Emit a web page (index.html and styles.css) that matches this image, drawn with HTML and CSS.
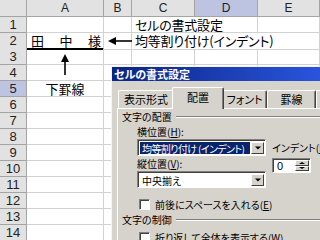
FILE: index.html
```html
<!DOCTYPE html>
<html lang="ja">
<head>
  <meta charset="UTF-8">
  <title>セルの書式設定</title>
  <link rel="stylesheet" href="styles.css">
</head>
<body>
  <div class="screen">
    <div class="sheet">
      <div class="row head">
        <div class="num"></div><div class="col">A</div><div class="col">B</div><div class="col">C</div><div class="col on">D</div><div class="col">E</div>
      </div>
      <div class="row">
        <div class="num">1</div><div class="cell"></div><div class="cell"></div><div class="cell text open">セルの書式設定</div><div class="cell"></div><div class="cell"></div>
      </div>
      <div class="row">
        <div class="num">2</div><div class="cell name"><span>田</span><span>中</span><span>様</span></div><div class="cell"></div><div class="cell text open">均等割り付け(インデント)</div><div class="cell open"></div><div class="cell"></div>
      </div>
      <div class="row">
        <div class="num">3</div><div class="cell"></div><div class="cell"></div><div class="cell"></div><div class="cell"></div><div class="cell"></div>
      </div>
      <div class="row">
        <div class="num">4</div><div class="cell"></div><div class="cell"></div><div class="cell"></div><div class="cell"></div><div class="cell"></div>
      </div>
      <div class="row">
        <div class="num on">5</div><div class="cell center">下罫線</div><div class="cell"></div><div class="cell"></div><div class="cell"></div><div class="cell"></div>
      </div>
      <div class="row">
        <div class="num">6</div><div class="cell"></div><div class="cell"></div><div class="cell"></div><div class="cell"></div><div class="cell"></div>
      </div>
      <div class="row">
        <div class="num">7</div><div class="cell"></div><div class="cell"></div><div class="cell"></div><div class="cell"></div><div class="cell"></div>
      </div>
      <div class="row">
        <div class="num">8</div><div class="cell"></div><div class="cell"></div><div class="cell"></div><div class="cell"></div><div class="cell"></div>
      </div>
      <div class="row">
        <div class="num">9</div><div class="cell"></div><div class="cell"></div><div class="cell"></div><div class="cell"></div><div class="cell"></div>
      </div>
      <div class="row">
        <div class="num">10</div><div class="cell"></div><div class="cell"></div><div class="cell"></div><div class="cell"></div><div class="cell"></div>
      </div>
      <div class="row">
        <div class="num">11</div><div class="cell"></div><div class="cell"></div><div class="cell"></div><div class="cell"></div><div class="cell"></div>
      </div>
      <div class="row">
        <div class="num">12</div><div class="cell"></div><div class="cell"></div><div class="cell"></div><div class="cell"></div><div class="cell"></div>
      </div>
      <div class="row">
        <div class="num">13</div><div class="cell"></div><div class="cell"></div><div class="cell"></div><div class="cell"></div><div class="cell"></div>
      </div>
      <div class="row">
        <div class="num">14</div><div class="cell"></div><div class="cell"></div><div class="cell"></div><div class="cell"></div><div class="cell"></div>
      </div>
    </div>

    <!-- callout arrows drawn over the grid -->
    <svg class="arrow arrow-left" width="26" height="10" viewBox="0 0 26 10">
      <polygon points="0,5 8,1 8,9" fill="#000"/>
      <line x1="7" y1="5" x2="24" y2="5" stroke="#000" stroke-width="1.6"/>
    </svg>
    <svg class="arrow arrow-up" width="10" height="22" viewBox="0 0 10 22">
      <polygon points="5,0 1,8 9,8" fill="#000"/>
      <line x1="5" y1="7" x2="5" y2="21" stroke="#000" stroke-width="1.6"/>
    </svg>

    <div class="dialog">
      <div class="title">セルの書式設定</div>
      <div class="tabs">
        <div class="tab t1">表示形式</div>
        <div class="tab t2 active">配置</div>
        <div class="tab t3">フォント</div>
        <div class="tab t4">罫線</div>
        <div class="tab t5">パターン</div>
      </div>
      <div class="panel">
        <div class="group">文字の配置</div>
        <div class="align">
          <div class="left">
            <div class="label">横位置(<u>H</u>):</div>
            <div class="combo">
              <span class="value sel">均等割り付け (インデント)</span>
              <span class="drop"></span>
            </div>
            <div class="label">縦位置(<u>V</u>):</div>
            <div class="combo">
              <span class="value">中央揃え</span>
              <span class="drop"></span>
            </div>
          </div>
          <div class="right">
            <div class="label">インデント(<u>I</u>):</div>
            <div class="spin">
              <span class="spin-value">0</span>
              <span class="spin-btns"><span class="up"></span><span class="down"></span></span>
            </div>
          </div>
        </div>
        <div class="check"><span class="box"></span>前後にスペースを入れる(<u>E</u>)</div>
        <div class="group">文字の制御</div>
        <div class="check"><span class="box"></span>折り返して全体を表示する(<u>W</u>)</div>
      </div>
    </div>
  </div>
</body>
</html>
```

FILE: styles.css
```css
body {
  margin: 0;
  background: #fff;
  font-family: "Noto Sans CJK JP", "Noto Sans", sans-serif;
  font-feature-settings: "palt";
  color: #000;
}
.screen {
  position: relative;
  width: 320px;
  height: 240px;
  overflow: hidden;
}

/* spreadsheet */
.row {
  display: grid;
  grid-template-columns: 27px 77px 28px 63px 63px 62px;
  height: 16px;
}
.row.head {
  height: 17px;
}
.cell, .num, .col {
  box-sizing: border-box;
  border-right: 1px solid #d2d2d2;
  border-bottom: 1px solid #d2d2d2;
  font-size: 13px;
  line-height: 15px;
  white-space: nowrap;
}
.num, .col {
  background: #e2e2e2;
  border-color: #a4a4a4;
  text-align: center;
  color: #222;
}
.num {
  font-family: "Liberation Sans", sans-serif;
  font-size: 13px;
}
.col {
  font-family: "Liberation Sans", sans-serif;
  font-size: 12px;
  line-height: 16px;
}
.num.on, .col.on {
  background: #bcc4e2;
}
.text {
  padding-left: 3px;
  letter-spacing: -0.2px;
}
.open {
  border-right-color: transparent;
}
.center {
  text-align: center;
}
.name {
  display: flex;
  justify-content: space-between;
  padding: 0 2px 0 4px;
  border-bottom: 2px solid #000;
}

.arrow {
  position: absolute;
}
.arrow-left {
  left: 108px;
  top: 36px;
}
.arrow-up {
  left: 60px;
  top: 54px;
}

/* dialog */
.dialog {
  position: absolute;
  left: 111px;
  top: 66px;
  width: 230px;
  height: 190px;
  background: #d6d3cc;
  border-left: 1px solid #f4f4f4;
  border-top: 1px solid #f4f4f4;
  font-size: 10px;
}
.title {
  height: 14px;
  line-height: 14px;
  padding-left: 2px;
  background: linear-gradient(to right, #0a2484, #2c5ae6);
  color: #fff;
  font-size: 11px;
  font-weight: bold;
}
.tabs {
  display: flex;
  align-items: flex-end;
  height: 21px;
  margin-top: 6px;
  padding-left: 6px;
}
.tab {
  box-sizing: border-box;
  flex-shrink: 0;
  height: 18px;
  line-height: 17px;
  text-align: center;
  border-top: 1px solid #fff;
  border-left: 1px solid #fff;
  border-right: 1px solid #404040;
  border-radius: 2px 2px 0 0;
  box-shadow: inset -1px 0 #808080;
  font-size: 11px;
}
.t1 { width: 56px; }
.t3 { width: 45px; }
.t4 { width: 49px; }
.t5 { width: 50px; }
.tab.active {
  position: relative;
  z-index: 1;
  height: 22px;
  width: 52px;
  margin: 0 -2px -1px;
  line-height: 19px;
  background: #d6d3cc;
}
.panel {
  margin-left: 5px;
  height: 150px;
  border-top: 1px solid #fff;
  border-left: 1px solid #fff;
  padding-left: 4px;
}
.group {
  display: flex;
  align-items: center;
  height: 15px;
}
.group::after {
  content: "";
  flex: 1;
  margin-left: 4px;
  border-top: 1px solid #808080;
  border-bottom: 1px solid #fff;
}
.align {
  display: flex;
  margin-left: 15px;
}
.left {
  width: 129px;
  flex-shrink: 0;
}
.right {
  margin-left: 6px;
  padding-top: 15px;
}
.label {
  height: 15px;
  line-height: 15px;
  white-space: nowrap;
}
.right .label {
  height: 17px;
  line-height: 17px;
}
.combo {
  box-sizing: border-box;
  display: flex;
  height: 17px;
  background: #fff;
  border-top: 1px solid #808080;
  border-left: 1px solid #808080;
  border-right: 1px solid #fff;
  border-bottom: 1px solid #fff;
  box-shadow: inset 1px 1px #404040;
  padding: 2px 1px 1px 2px;
}
.value {
  flex: 1;
  line-height: 13px;
  padding-left: 2px;
  white-space: nowrap;
  overflow: hidden;
}
.value.sel {
  background: #0a246a;
  color: #fff;
  letter-spacing: -0.6px;
}
.drop, .spin-btns span {
  position: relative;
  box-sizing: border-box;
  background: #d6d3cc;
  border-top: 1px solid #fff;
  border-left: 1px solid #fff;
  border-right: 1px solid #404040;
  border-bottom: 1px solid #404040;
}
.drop {
  width: 13px;
  margin-left: 1px;
}
.drop::after, .spin-btns span::after {
  content: "";
  position: absolute;
  left: 50%;
  top: 50%;
  border-left: 3px solid transparent;
  border-right: 3px solid transparent;
  transform: translate(-50%, -50%);
}
.drop::after {
  border-top: 3px solid #000;
}
.spin {
  box-sizing: border-box;
  display: flex;
  width: 39px;
  height: 15px;
  margin-top: 2px;
  background: #fff;
  border-top: 1px solid #808080;
  border-left: 1px solid #808080;
  border-right: 1px solid #fff;
  border-bottom: 1px solid #fff;
  box-shadow: inset 1px 1px #404040;
  padding: 1px 1px 1px 2px;
}
.spin-value {
  flex: 1;
  line-height: 12px;
  padding-left: 2px;
  font-family: "Liberation Sans", sans-serif;
  font-size: 11px;
}
.spin-btns {
  display: flex;
  flex-direction: column;
  width: 14px;
}
.spin-btns span {
  flex: 1;
}
.spin-btns .up::after {
  border-bottom: 2px solid #000;
}
.spin-btns .down::after {
  border-top: 2px solid #000;
}
.check {
  display: flex;
  align-items: center;
  height: 16px;
  margin-left: 17px;
  white-space: nowrap;
}
.align + .check {
  margin-top: 8px;
}
.group + .check {
  margin-top: 2px;
}
.box {
  box-sizing: border-box;
  width: 11px;
  height: 11px;
  margin-right: 5px;
  background: #fff;
  border-top: 1px solid #808080;
  border-left: 1px solid #808080;
  border-right: 1px solid #fff;
  border-bottom: 1px solid #fff;
  box-shadow: inset 1px 1px #404040;
}
```
